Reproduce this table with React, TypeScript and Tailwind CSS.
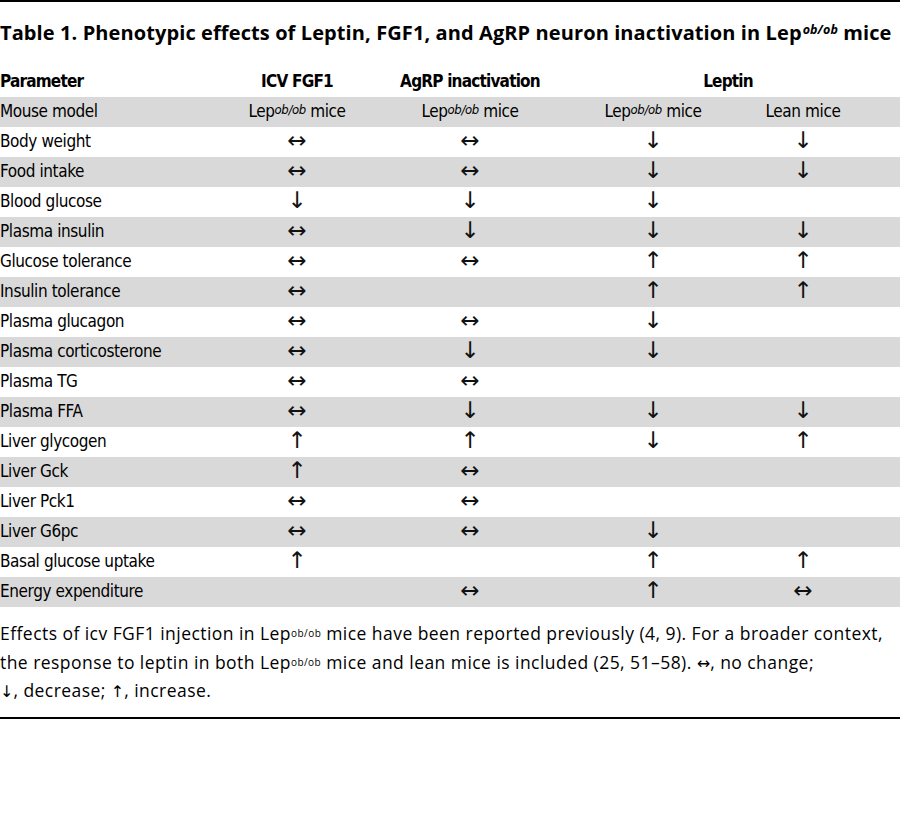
const rows: [string, string, string, string, string][] = [
  ["Body weight", "↔", "↔", "↓", "↓"],
  ["Food intake", "↔", "↔", "↓", "↓"],
  ["Blood glucose", "↓", "↓", "↓", ""],
  ["Plasma insulin", "↔", "↓", "↓", "↓"],
  ["Glucose tolerance", "↔", "↔", "↑", "↑"],
  ["Insulin tolerance", "↔", "", "↑", "↑"],
  ["Plasma glucagon", "↔", "↔", "↓", ""],
  ["Plasma corticosterone", "↔", "↓", "↓", ""],
  ["Plasma TG", "↔", "↔", "", ""],
  ["Plasma FFA", "↔", "↓", "↓", "↓"],
  ["Liver glycogen", "↑", "↑", "↓", "↑"],
  ["Liver Gck", "↑", "↔", "", ""],
  ["Liver Pck1", "↔", "↔", "", ""],
  ["Liver G6pc", "↔", "↔", "↓", ""],
  ["Basal glucose uptake", "↑", "", "↑", "↑"],
  ["Energy expenditure", "", "↔", "↑", "↔"],
];

const grid = "grid grid-cols-[222px_150px_196px_160px_150px] items-center h-[30px]";
const narrow = "font-['DejaVu_Sans_Condensed',sans-serif]";

const Lep = () => (
  <>
    Lep<sup className="italic text-[13px] relative -top-[3px]">ob/ob</sup> mice
  </>
);

const Arrow = ({ v }: { v: string }) => (
  <span className="font-['DejaVu_Sans',sans-serif] text-[23px] leading-none tracking-normal text-[#111]">{v}</span>
);

const Sym = ({ v }: { v: string }) => (
  <span className="font-['DejaVu_Sans',sans-serif] text-[16px] leading-none tracking-normal">{v}</span>
);

export default function App() {
  return (
    <div className="w-[900px] bg-white text-black border-t-2 border-black">
      <h1 className="h-[62px] flex items-center font-['Open_Sans',sans-serif] font-bold text-[20px] tracking-[0.1px]">
        Table 1. Phenotypic effects of Leptin, FGF1, and AgRP neuron inactivation in Lep
        <sup className="italic text-[12.5px] relative -top-[3px] ml-[1px]">ob/ob</sup>
        &nbsp;mice
      </h1>

      <div className={`${narrow} text-[17px] tracking-[-0.4px]`}>
        <div className={`${grid} mt-[3px] font-bold tracking-[-0.8px]`}>
          <div>Parameter</div>
          <div className="text-center">ICV FGF1</div>
          <div className="text-center">AgRP inactivation</div>
          <div className="col-span-2 text-center pl-[10px]">Leptin</div>
        </div>

        <div className={`${grid} bg-[#d9d9d9]`}>
          <div>Mouse model</div>
          <div className="text-center"><Lep /></div>
          <div className="text-center"><Lep /></div>
          <div className="text-center pl-[10px]"><Lep /></div>
          <div className="text-center">Lean mice</div>
        </div>

        {rows.map((r, i) => (
          <div key={r[0]} className={`${grid} ${i % 2 === 1 ? "bg-[#d9d9d9]" : ""}`}>
            <div>{r[0]}</div>
            <div className="text-center"><Arrow v={r[1]} /></div>
            <div className="text-center"><Arrow v={r[2]} /></div>
            <div className="text-center pl-[10px]"><Arrow v={r[3]} /></div>
            <div className="text-center"><Arrow v={r[4]} /></div>
          </div>
        ))}
      </div>

      <p className="pt-[12px] pb-[12px] border-b-2 border-black font-['Open_Sans',sans-serif] text-[17.5px] tracking-[0.45px] leading-[28.5px]">
        Effects of icv FGF1 injection in Lep<sup className="text-[10px] leading-none relative -top-[3px]">ob/ob</sup> mice have
        been reported previously (4, 9). For a broader context,
        <br />
        the response to leptin in both Lep<sup className="text-[10px] leading-none relative -top-[3px]">ob/ob</sup> mice and lean
        mice is included (25, 51–58). <Sym v="↔" />, no change;
        <br />
        <Sym v="↓" />, decrease; <Sym v="↑" />, increase.
      </p>
    </div>
  );
}
